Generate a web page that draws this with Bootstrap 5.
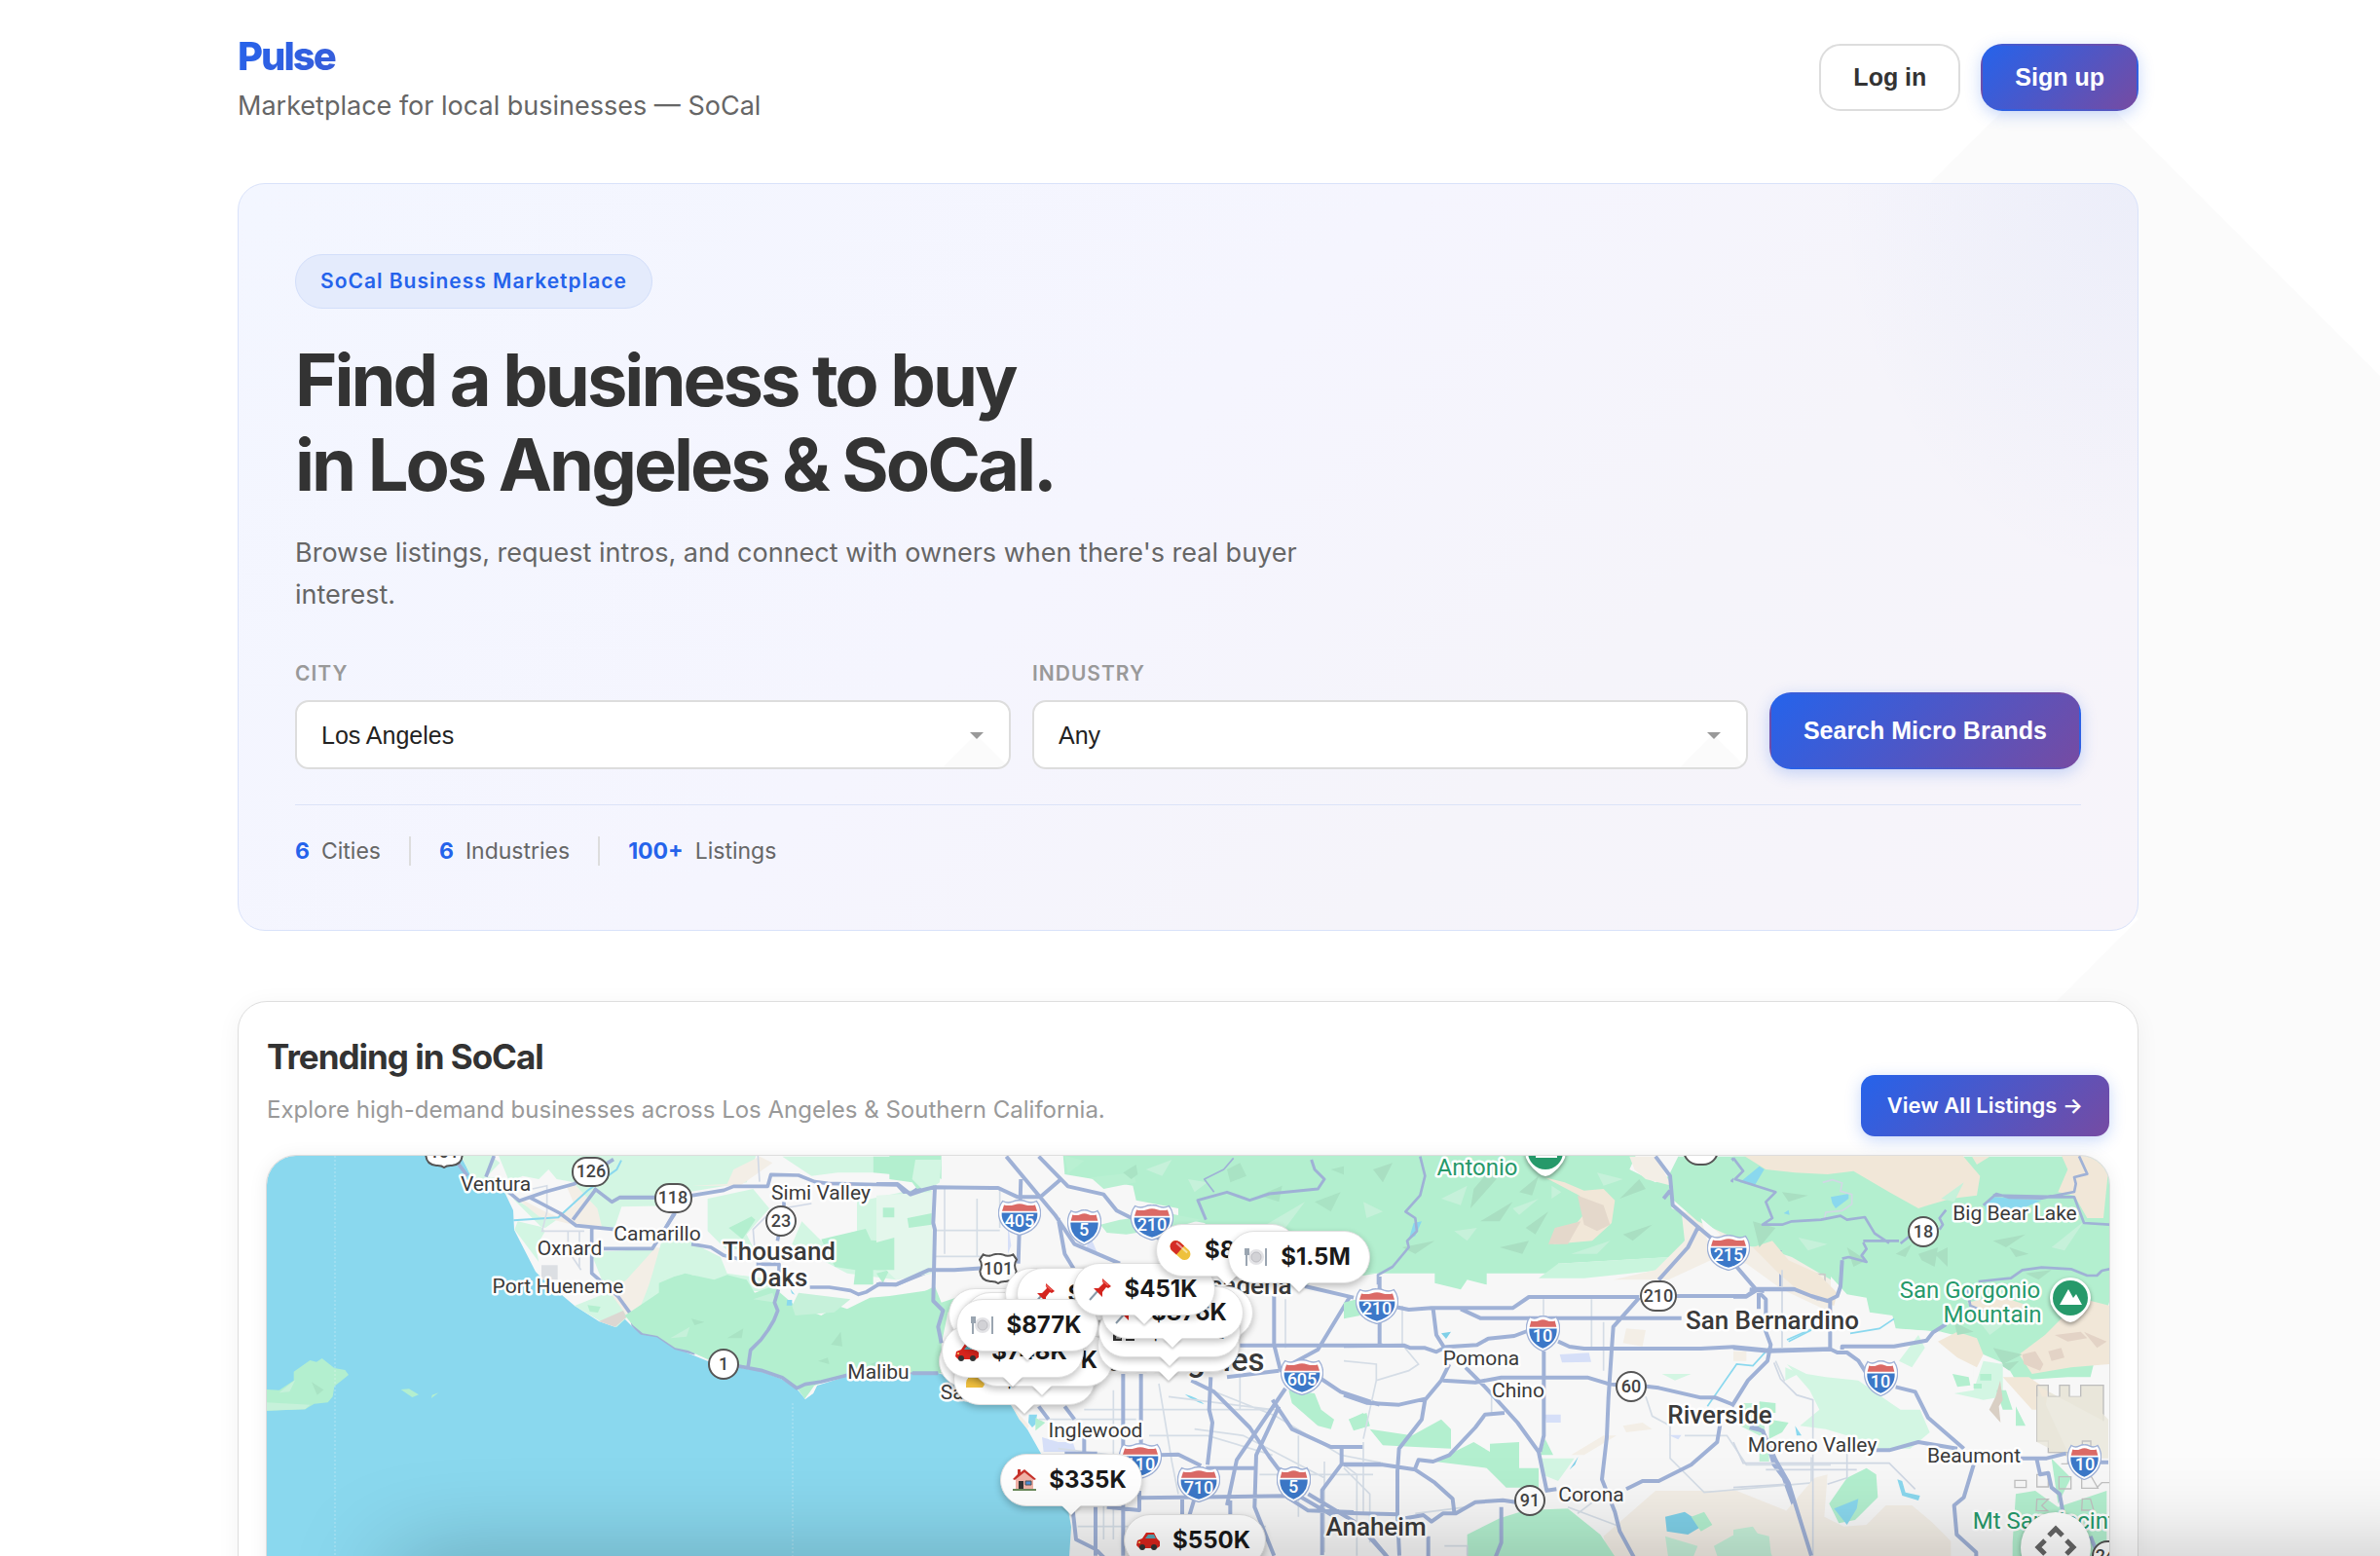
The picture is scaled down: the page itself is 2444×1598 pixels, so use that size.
<!DOCTYPE html>
<html lang="en">
<head>
<meta charset="utf-8">
<meta name="viewport" content="width=device-width, initial-scale=1">
<title>Pulse — Marketplace for local businesses</title>
<link href="https://cdn.jsdelivr.net/npm/bootstrap@5.3.0/dist/css/bootstrap.min.css" rel="stylesheet">
<style>
  :root { --ink:#333; --soft:#666; --pale:#999; --blue:#2563eb; --grad:linear-gradient(135deg,#2563eb 0%,#764ba2 100%); }
  body { font-family:Inter,"Liberation Sans",sans-serif; color:var(--ink); background:#fff; padding-right:4px; }
  .backdrop { top:0; right:0; width:902px; height:100%; z-index:-1; }
  .page { max-width:1952px; }
  .topbar { padding-top:34px; }
  .brand { font-size:40px; line-height:48px; font-weight:800; letter-spacing:-2px; background:linear-gradient(135deg,#2563eb 0%,#764ba2 100%); background-size:542px 100%; -webkit-background-clip:text; background-clip:text; color:transparent; text-decoration:none; }
  .tagline { font-size:27px; line-height:44px; color:var(--soft); margin-top:5px; }
  .actions { gap:21px; margin-top:11px; }
  .btn-pulse { font-family:"Liberation Sans",Arial,sans-serif; font-weight:700; font-size:25px; line-height:29px; border-radius:22px; padding:18px 33px; border:2px solid #ddd; background:#fff; color:var(--ink); }
  .btn-grad { color:#fff; border-color:transparent; background:var(--grad); box-shadow:0 4px 16px rgba(37,99,235,.25); }
  .btn-search { padding:22px 33px; height:79px; border-radius:22px; white-space:nowrap; }
  .hero { margin-top:57px; border:1px solid #d9e2fa; border-radius:28px; padding:72px 58px 66px;
    background:radial-gradient(ellipse 310px 410px at 100% 0,rgba(37,99,235,.045),rgba(37,99,235,.02) 60%,rgba(37,99,235,0)),linear-gradient(135deg,#f3f6ff 0%,#f5f5fe 45%,#f5f4fa 70%,#f7f4fa 100%); }
  .pill-tag { font-size:21px; line-height:32px; font-weight:600; letter-spacing:1px; color:var(--blue); background:#e4ebfc; border:1px solid #d2defa; border-radius:28px; padding:11px 25px; }
  .headline { font-size:74px; line-height:87px; font-weight:700; letter-spacing:-3px; margin:30px 0 25px; }
  .intro { font-size:27px; line-height:43px; color:var(--soft); max-width:1060px; margin-bottom:47px; }
  .searchrow { gap:22px; }
  .field-label { font-size:21px; line-height:26px; font-weight:600; letter-spacing:1px; color:var(--pale); margin-bottom:14px; }
  .field-pick { font-family:"Liberation Sans",Arial,sans-serif; font-size:25px; line-height:30px; height:71px; color:#222; padding:0 60px 0 25px; border:2px solid #ddd; border-radius:14px;
    background:url("data:image/svg+xml,%3Csvg xmlns='http://www.w3.org/2000/svg' width='96' height='36' viewBox='0 0 96 36'%3E%3Cpath d='M28 36L62 2L96 36z' fill='%23fbfbfb'/%3E%3Cpath d='M56 0h14l-7 7z' fill='%23999'/%3E%3C/svg%3E") no-repeat right 0 bottom 0 #fff; background-size:96px 36px; }
  .stats { margin-top:36px; padding-top:32px; border-top:1px solid #dbe3f8; font-size:23px; line-height:30px; color:var(--soft); }
  .stats b { color:var(--blue); font-weight:700; margin-right:12px; }
  .stats .bar { width:2px; height:30px; background:#ddd; margin:0 29px; }
  .trend { margin-top:72px; border:1px solid #dedede; border-radius:30px; padding:30px 29px; background:#fff; box-shadow:0 4px 24px rgba(0,0,0,.05); }
  .trend h2 { font-size:35px; line-height:52px; font-weight:700; letter-spacing:-1px; margin:0; }
  .trend p { font-size:24px; line-height:32px; color:var(--pale); margin:13px 0 11px; }
  .btn-all { font-size:22px; line-height:31px; font-weight:600; color:#fff; background:var(--grad); border:0; border-radius:14px; padding:16px 27px; box-shadow:0 4px 16px rgba(37,99,235,.25); }
  .map { height:640px; margin-top:20px; border-radius:30px; background:#8ad8ee; box-shadow:0 2px 20px rgba(0,0,0,.08); outline:1px solid #ddd; }
  .map > svg { width:100%; height:100%; display:block; }
  .land text { font-family:Roboto,sans-serif; font-size:21px; fill:#3a3a3a; stroke:#fff; stroke-width:5px; stroke-linejoin:round; paint-order:stroke; text-anchor:middle; }
  .land .big { font-size:26px; font-weight:500; }
  .land .park { fill:#26996a; font-size:24px; }
  .land .num { stroke:none; font-size:18px; font-weight:500; fill:#444; }
  .land .iso { fill:#fff; }
  .price { position:absolute; left:calc(50% + var(--x) * 1px); top:calc(var(--y) * 1px); width:146px; height:54px; border:1px solid #e0e0e0; border-radius:27px; background:#fff; color:#1a1a1a; font-size:24px; font-weight:700; line-height:30px; padding:0 3px 0 0; box-shadow:0 3px 7px rgba(0,0,0,.24); display:flex; align-items:center; justify-content:center; gap:13px; }
  .price::after { content:""; position:absolute; left:62px; top:52px; border:10px solid transparent; border-top-color:#fff; border-bottom:0; filter:drop-shadow(0 2px 1px rgba(0,0,0,.2)); }
  .price svg { width:24px; height:24px; flex:none; }
  .pan { position:absolute; right:19px; top:366px; width:72px; height:72px; border:0; border-radius:50%; background:#fff; padding:0; box-shadow:0 1px 5px rgba(0,0,0,.3); }
  .dock-shade { left:420px; right:-100px; bottom:-50px; height:20px; border-radius:20px; box-shadow:0 0 100px 20px rgba(0,0,0,.34); pointer-events:none; }
</style>
<script src="https://cdn.jsdelivr.net/npm/bootstrap@5.3.0/dist/js/bootstrap.bundle.min.js"></script>
</head>
<body class="vh-100 overflow-hidden position-relative">
<svg class="backdrop position-absolute" viewBox="0 0 902 1598" preserveAspectRatio="xMaxYMin slice" aria-hidden="true"><path d="M572 56L902 386V1598H0L654 944 200 428z" fill="#fbfbfb"/></svg>

<svg class="d-none" aria-hidden="true">
  <symbol id="i3" viewBox="0 0 132 110"><path d="M14 4Q28 12 44 6Q56 1 66 2Q76 1 88 6Q104 12 118 4Q134 24 130 50Q122 94 66 109Q10 94 2 50Q-2 24 14 4z" fill="#fff" stroke="#9fb1d6" stroke-width="4"/><path d="M18 16Q34 20 50 15Q66 10 82 15Q98 20 114 16L120 35H12z" fill="#db6a66"/><path d="M11 40H121Q124 84 66 101Q8 84 11 40z" fill="#3c78c8"/></symbol>
  <symbol id="i2" viewBox="0 0 105 110"><path d="M12 4Q24 12 36 6Q46 1 52 2Q59 1 69 6Q81 12 93 4Q107 24 103 50Q96 92 52 109Q9 92 2 50Q-2 24 12 4z" fill="#fff" stroke="#9fb1d6" stroke-width="4"/><path d="M16 16Q28 20 40 15Q52 10 65 15Q77 20 89 16L94 35H11z" fill="#db6a66"/><path d="M10 40H95Q97 82 52 101Q8 82 10 40z" fill="#3c78c8"/></symbol>
  <symbol id="us" viewBox="0 0 120 96"><path d="M14 4Q30 12 44 5Q60 0 76 5Q90 12 106 4L117 20Q106 36 116 56Q114 84 84 87Q68 86 60 93Q52 86 36 87Q6 84 4 56Q14 36 3 20z" fill="#fff" stroke="#555" stroke-width="6"/></symbol>
  <symbol id="e-pin" viewBox="0 0 24 24"><path d="M1 23L10 13" stroke="#8899a8" stroke-width="2"/><path d="M14 1l9 8-3 2-2-1-4 5 0 5-9-9 5 0 5-5-1-2z" fill="#d4241e"/><path d="M14 3l6 5" stroke="#f0605a" stroke-width="1.500"/></symbol>
  <symbol id="e-plate" viewBox="0 0 24 24"><circle cx="12" cy="12" r="8" fill="#e3e3e6"/><circle cx="12" cy="12" r="5" fill="#d2d2d6" stroke="#bdbdc2"/><path d="M2 3v18M0 3v6h4V3M22 3v18" fill="none" stroke="#9aa5b1" stroke-width="2"/></symbol>
  <symbol id="e-car" viewBox="0 0 24 24"><path d="M1 12l5-2 4-6h8l3 6 3 3v5l-3 2H3l-3-3z" fill="#d9251d"/><path d="M9 10l3-4h6l2 4z" fill="#58a6b4"/><circle cx="6" cy="19" r="3" fill="#333"/><circle cx="18" cy="19" r="3" fill="#333"/><circle cx="3" cy="14" r="1" fill="#ffd76b"/></symbol>
  <symbol id="e-house" viewBox="0 0 24 24"><path d="M3 10L12 3l9 7v12H3z" fill="#f2b3a8"/><path d="M0 11L5 6V1h3v3l4-3 12 10-2 1L12 4 2 12z" fill="#c8322b"/><path d="M6 13h5v9H6z" fill="#333"/><path d="M13 13h6v4h-6z" fill="#4d8fd6" stroke="#555"/><path d="M0 22h24" stroke="#6a8a5c" stroke-width="2"/></symbol>
  <symbol id="e-pill" viewBox="0 0 24 24"><g transform="rotate(42 12 12)"><rect x="0" y="6" width="24" height="12" rx="6" fill="#eec13c"/><path d="M12 6H6a6 6 0 0 0 0 12h6z" fill="#d42d26"/><path d="M4 9h15" stroke="#fff" stroke-opacity=".5" stroke-width="2"/></g></symbol>
  <symbol id="e-taco" viewBox="0 0 24 24"><path d="M3 12Q8 2 20 5l3 6-4 3z" fill="#4d9a3c"/><path d="M10 5l10 2 2 6-8-2z" fill="#c43a34"/><path d="M1 21Q0 10 8 9Q18 9 20 18l-2 3z" fill="#f0c03e"/></symbol>
  <symbol id="e-shop" viewBox="0 0 24 24"><path d="M1 4h22v18H1z" fill="#333"/><path d="M4 14h5v6H4zM15 14h5v6h-5z" fill="#999"/><path d="M10 14h4v8h-4z" fill="#eee"/></symbol>
</svg>

<div class="page mx-auto">
  <header class="topbar d-flex justify-content-between align-items-start">
    <div>
      <a class="brand d-block" href="#">Pulse</a>
      <div class="tagline">Marketplace for local businesses — SoCal</div>
    </div>
    <div class="actions d-flex">
      <button class="btn btn-pulse" type="button">Log in</button>
      <button class="btn btn-pulse btn-grad" type="button">Sign up</button>
    </div>
  </header>

  <main>
    <section class="hero">
      <span class="pill-tag d-inline-block">SoCal Business Marketplace</span>
      <h1 class="headline">Find a business to buy<br>in Los Angeles &amp; SoCal.</h1>
      <p class="intro">Browse listings, request intros, and connect with owners when there's real buyer interest.</p>
      <form class="searchrow d-flex align-items-end">
        <div class="flex-fill w-50 d-flex flex-column">
          <label class="field-label" for="city">CITY</label>
          <select class="field-pick form-select" id="city"><option>Los Angeles</option></select>
        </div>
        <div class="flex-fill w-50 d-flex flex-column">
          <label class="field-label" for="industry">INDUSTRY</label>
          <select class="field-pick form-select" id="industry"><option>Any</option></select>
        </div>
        <button class="btn btn-pulse btn-grad btn-search" type="button">Search Micro Brands</button>
      </form>
      <div class="stats d-flex align-items-center">
        <span><b>6</b>Cities</span><span class="bar"></span>
        <span><b>6</b>Industries</span><span class="bar"></span>
        <span><b>100+</b>Listings</span>
      </div>
    </section>

    <section class="trend">
      <div class="d-flex justify-content-between align-items-end">
        <div>
          <h2>Trending in SoCal</h2>
          <p>Explore high-demand businesses across Los Angeles &amp; Southern California.</p>
        </div>
        <a class="btn btn-all" href="#">View All Listings →</a>
      </div>

      <div class="map position-relative overflow-hidden">
        <svg class="land" viewBox="274 1186 1892 640" preserveAspectRatio="xMidYMin slice" role="img" aria-label="Map of Southern California">
          <path d="M470 1180L484 1207 505 1212 518 1223 527 1242 528 1262 550 1305 557 1312 590 1340 615 1356 632 1362 640 1352 650 1362 660 1369 677 1372 695 1384 727 1397 767 1405 780 1407 802 1415 818 1425 827 1436 835 1430 839 1422 855 1417 870 1412 963 1409 980 1415 1000 1425 1038 1442 1055 1467 1068 1490 1087 1527 1097 1550 1100 1567 1098 1598 1080 1640V1830H2170V1180z" fill="#f7f7f7"/>
          <!-- Ventura county and the islands -->
          <g transform="translate(270 1180) scale(.333333)">
            <path d="M10 738L50 740 95 710V683L145 648 165 653 182 642 220 672 253 678 264 693 220 728 215 760 200 778 158 782 130 799 10 803z" fill="#b3efcf"/>
            <path d="M50 748L100 708 82 745zM10 778L145 785 130 799 10 803z" fill="#c6f1da"/><path d="M150 715l37 24-20 16z" fill="#a9e3c4"/>
            <path d="M425 738l25-2 30 18-20 8zM519 765l2-10 20-7z" fill="#b3efcf"/>
            <path d="M610 15H700L730 40 690 82 735 90 760 140 720 120 640 80z" fill="#d3f6e3"/>
            <path d="M725 15H1320V170L1105 175 1080 250 1040 240 1000 200 960 100 905 90 880 60 850 90 800 80 760 100z" fill="#d3f6e3"/>
            <path d="M770 150L790 160 870 205 905 215 870 240 785 220 775 245 850 345 840 300 870 250z" fill="#d3f6e3"/>
            <path d="M765 135L860 185 905 205 960 170 935 110 955 100 1030 180 1045 240 955 230 850 205z" fill="#f3eee6"/>
            <path d="M1010 315L1200 305 1320 290V400L1150 490 1090 545 1040 528 960 480 1060 440z" fill="#d3f6e3"/>
            <path d="M1210 300L1265 310 1250 350 1200 390 1180 440 1160 490 1120 510 1070 440 1120 400z" fill="#f3eee6"/>
            <path d="M1035 528L1110 495 1120 515 1085 545z" fill="#dcd7d2"/>
            <path d="M1135 500L1220 440 1220 410 1290 380 1320 400V625L1275 610 1215 573 1165 565 1140 545z" fill="#b3efcf"/>
            <path d="M1000 478l40 5-8 18-25-3z" fill="#b3efcf"/>
            <path d="M772 217L910 208 1000 125 1090 60 1104 32" fill="none" stroke="#8ad8ee" stroke-width="6"/>
            <path d="M858 355h50v44h-50z" fill="#dcdfe3"/>
            <g fill="none" stroke="#d5dce6" stroke-width="5"><path d="M830 120l45-10v80l-15 60h130M940 250v60l40 60M975 250v110"/></g>
            <g fill="none" stroke="#9fb1d6" stroke-width="11" stroke-linejoin="round"><path d="M600 40l30 40M712 18l-25 65M740 115l50 42 80-28 90-25 120-75M820 145l95 50 50 38 120 12M1025 122L955 215M1020 118l55 42 25-14h110M1013 240v140l80 70 40 55 8 35 25 24 50 8 55 38 60 16M1050 304h150l70-110"/></g>
          </g>
          <g transform="translate(560 1180) scale(.333333)">
            <path d="M440 15H650L620 100 440 130z" fill="#d3f6e3"/>
            <path d="M450 110L560 105 580 60 660 20 700 40 600 110z" fill="#f3eee6"/>
            <path d="M500 150L640 120 690 180 620 260 640 300 560 310 500 250z" fill="#d3f6e3"/><path d="M565 240l70-35 12 10-40 60z" fill="#b3efcf"/>
            <path d="M730 20H1010V70H900L820 80zM960 160L1190 110V380L1080 400 930 380 760 290 790 220 850 280 960 250z" fill="#d3f6e3"/>
            <path d="M1010 20H1200V100L1150 110 1120 80 1010 70zM850 275L987 243 1003 278 1075 283V370H1010V415H950L955 370 892 360z" fill="#b3efcf"/>
            <path d="M1042 177h40v30h-40zM1118 210l75-15v35l-70 10zM1020 380l40-10-20 40z" fill="#b3efcf"/>
            <path d="M370 240L480 300 540 330 560 380 700 400 720 440 580 430 440 380 350 400 300 480 330 380z" fill="#d3f6e3"/>
            <path d="M380 400L430 380 520 400 560 385 620 400 645 440 700 420 770 480 850 510 900 480 930 490 1000 455 1060 450 1200 430V688L1130 685 930 690 838 722 800 768 775 733 725 700 660 680 600 670 500 645 440 618 400 610 345 573 300 565 270 540 245 510 350 440z" fill="#b3efcf"/>
            <path d="M385 580l60-35-10 30zM760 480l20-40 160 20-50 40-120 10zM640 460l60-20 10 30z" fill="#c6f1da"/><path d="M560 580l50-30-5 30zM880 600l30-40 5 45zM1000 660l30-10-5 20zM1060 600l50-25 5 20zM840 650l30-10 5 20zM450 520l40 10-30 10zM1120 640l20-20 5 30z" fill="#a9e3c4"/>
            <path d="M745 462h15v17h-17zM755 428l14 18-10-4zM740 430l20 20" fill="#8ad8ee"/>
            <path d="M798 768l27-18 13-28-10 5-14 20z" fill="#f7f7f7"/>
            <g fill="none" stroke="#d0d8e6" stroke-width="5"><path d="M655 18l5 80M820 165l-120 20-60 60 5 60"/></g>
            <g fill="none" stroke="#9fb1d6" stroke-width="11" stroke-linejoin="round"><path d="M230 147h110M440 142l110-18 30-12h105l10-36 85 2 50 20 40 5 215 5 20 22 20 4 30-20h50M395 198l-35 60M735 160v30l-20 90M450 290l60 10 40 25 50 12M650 352h70v60M815 423h60l65 10 25 12 25-8 40-25 50 3 120-48M718 430l-12 40 10 25-12 30-18 30-22 30-32 32-8 55M590 665l75 14 65 22 45 33 25-12 50-8 80-20M1120 685h80"/></g>
          </g>
          <!-- Los Angeles basin -->
          <g transform="translate(900 1180) scale(.333333)">
            <path d="M40 15H200V90L150 60 160 110 125 120 110 100 40 90z" fill="#b3efcf"/><path d="M120 30H200L195 100 150 130 110 90z" fill="#d3f6e3"/>
            <path d="M0 140L170 130 175 380 60 400 0 340z" fill="#e4f7ec"/><path d="M20 178h35v30H20zM95 210l75-15v35l-70 10zM0 285L55 270V370H0z" fill="#b3efcf"/>
            <path d="M0 465L75 450 130 445 180 420 200 470 260 450 250 480 220 500 200 600V688L100 685 0 692z" fill="#b3efcf"/>
            <path d="M575 15H1500V380H1540L1480 390 1380 400 1300 420 1260 400 1010 225 930 210V180L800 155 790 110 580 75z" fill="#b3efcf"/>
            <path d="M690 230l60-15 150-20 100 20-50 15-180 30-60-5zM580 18l60 15-50 40zM660 85l130-15 10 30-100 20z" fill="#b9f0d2"/>
            <path d="M760 70l40-25 5 30-20 15zM1080 60l40-20 20 40-50 20zM1180 140l70-30-10 50zM1350 160l80-30-30 60zM1100 270l80-20-40 50zM1400 60l80-20-30 40zM1240 340l90-60-30 70z" fill="#a9e3c4"/><path d="M830 60l80-30-30 50zM1200 230l120-70-60 80zM1360 290l80 20-60 40zM960 90l60 10-40 30z" fill="#c6f1da"/>
            <path d="M510 885l50 15 45 0 10 30-100 0zM660 270l20 45-35-12zM405 225l10 70-10 25z" fill="#d6dff8"/>
            <path d="M470 815l25 0-5 30-10 10 -12-15z" fill="#8ad8ee"/><path d="M490 825l30 15-30 25z" fill="#b3efcf"/>
            <path d="M950 752q40 10 60 32q-40-14-60-32z" fill="#8ad8ee"/>
            <path d="M1270 740L1350 750 1370 800 1410 830 1400 860 1360 850 1280 780zM1455 830L1500 810 1520 850 1480 860z" fill="#b3efcf"/>
            <path d="M415 785L440 830 465 860 470 850 445 820z" fill="#f3eee6"/>
            <g fill="none" stroke="#d5dde6" stroke-width="5"><path d="M210 120v200M380 120v120M180 248h200M310 150v180M180 328h150M730 740v460M640 800h600M500 830h300M870 720l40 240 20 100M560 920l250 30M1030 740l200 80 200 120 130 25M980 860l150 20 250 130M1260 460v150M620 1160h160M900 760l320 40M1120 640v160M840 880h180l200 60M700 1000v200M1300 880v250M1380 960v280M860 1160h340M1440 980l80 80v150M1180 1000h350"/></g>
            <g fill="none" stroke="#9fb1d6" stroke-width="12" stroke-linejoin="round"><path d="M0 105h65l40 32 40-14 30-8 200 2 60 28h70l60-52M180 115l-5 110 5 20-5 220 30 30-15 50 10 50M0 415h60l100-45 80 0 150-10M400 20l150 180 60 90 140 60M500 20l90 92 110 25 40 50 60 30 100 80M445 90l-8 260 M560 210l20 110 30 50M190 688h-80M1120 602h440M970 710l70 35 110 110 60 90 90 120 120 70M1030 700l-5 100 10 40-15 130M1240 680l120-65 100-165M1240 680l-160 20M1225 450v150l20 80M1320 420l150 35M1260 735l-150 220-30 140M1240 790l-70 150-5 160 60 150M1370 705l60 40 120 40M1220 770l60 90 120 55h100M1015 980h155M870 940l60-2 70 35M580 935h100M640 870v65M760 690v250M815 690v250M580 790l30 40M500 790l30 40M810 1072l450-6 70 45 140 5M1330 1060l150 90 90 100M810 1050v60l-100-10M605 1110l10 90 60 30 40 40M760 1090v160M675 1100v150M942 1075v50M978 1080l-15 50M1090 1080v50M1433 920v48h120M1433 968l-60 80v200M1550 390v40"/><path d="M1340 30l10 30 30 30-20 30-150 15-60 20-70-25-90 25 25 60" stroke-width="9"/><path d="M1100 25l-30 35-60 30 30 40" stroke-width="5"/></g>
          </g>
          <!-- Inland Empire -->
          <g transform="translate(1380 1180) scale(.333333)">
            <path d="M0 15H900L880 60 960 100 1000 80 1010 180 1060 200 1050 280 1010 330 660 350V380H440V415L380 400 360 430 280 410V380H0z" fill="#b3efcf"/>
            <path d="M660 350L1000 330 980 370 740 395H600z" fill="#c9f5dd"/>
            <path d="M880 20H960L1010 110 930 90 895 60zM1040 190L1100 200 1200 260 1280 310 1370 320 1500 400V500L1350 430 1240 350 1130 340 1000 400 830 400 960 370 1050 280z" fill="#f3eee6"/>
            <path d="M620 85l60 15 60 25 60-5 35 35-10 70-60 55-120 10 60-50 50-60-30-40z" fill="#f1e7d8"/><path d="M650 240l80-20-40 70-60 0zM720 140l80 30 20 60-40 20-40-20z" fill="#e4d8cb"/>
            <path d="M400 120l60-70 10 40-80 90zM540 130l60-50-20 60zM420 220l100-60-40 60zM560 240l70-50-40 70zM90 60l60-20-30 60zM180 300l100-20-60 40zM850 150l60-60 20 30zM860 260l90-30-60 50zM480 300l90-20-20 40z" fill="#a9dfc2"/><path d="M300 150l80-40-20 60zM520 180l80-30-60 50zM640 110l30 20-30 20zM340 250l70-10-30 40zM60 160l60 30-50 20zM780 70l80 20-60 20zM700 320l120-40-40 40z" fill="#c6f1da"/>
            <path d="M1030 20H1500V400L1380 330 1200 270 1090 220 1010 150 1000 80z" fill="#b3efcf"/><path d="M1230 20H1500V80L1400 70 1290 60z" fill="#f1e7d8"/>
            <path d="M1230 50l60-5-20 40 0 30-50-5zM215 225l25-5-20 45-20 10z" fill="#8ad8ee"/><path d="M1100 210l60 50-40 20z" fill="#f7f7f7"/>
            <path d="M0 470l40-10 10 50-50 10zM80 860l130 20 90-50 30 30 0 60-110-5-100-5zM15 830l55-20 10 40-50 15zM450 905l90-5v80l60 0v60l-100 0-60-60-160-20 120-60 50 30zM620 890l25 50-40 0z" fill="#b3efcf"/>
            <path d="M600 950h110l-50 70-50-20zM1360 670l70 30-10 60-60-30zM980 690l90 0-50 20zM1460 780l40-10v80z" fill="#d3f6e3"/>
            <path d="M870 550l60 5-10 50-60-10zM700 940l100-60 40 0-100 60zM1200 620h40v30h-40zM860 850l60-10 30 20-80 10zM960 1050l250 0 150 60 140 180H820l-20-100z" fill="#f3eee6"/>
            <path d="M1230 780h100l60 80-80 20 0 80-30 0 0-80-60-30z" fill="#c0f1d6"/><path d="M560 1110l130-5 100 80 60 90H560l-180 0 0-90 100-50z" fill="#b3efcf"/>
            <path d="M1140 1220l90-50 80 20 10 90h-160zM990 1190l100 30-20 50-70-10z" fill="#c6f0d9"/><path d="M990 1130l60-15 60 40-50 30-65-10zM695 985l27-40-10 25zM300 565l30-5-15 22zM1390 850l20 30-15 0z" fill="#7fd0e8"/><path d="M1070 1130l40-15 25 40-35 20z" fill="#b3efcf"/>
            <path d="M665 630l90-5 7 28-90 2zM620 815h48v25h-45zM1000 878h40l-10 14z" fill="#d6dff8"/>
            <path d="M1370 590l70-35M1120 790l90-130 50 5 50-55" stroke="#8ad8ee" stroke-width="5" fill="none"/><path d="M1452 383h30v35h-30z" fill="none" stroke="#c9c9c9" stroke-width="5"/>
            <g fill="none" stroke="#d5dde6" stroke-width="5"><path d="M180 480v120l50 60-30 20-100 30-40 180M615 460v60M763 460v150M800 530v150M60 900v220M455 750v60M930 760l20 60 55 30v100l105 105 340-30M1050 880h130l60 90h260M690 1100l160 60M720 1120l80-60M1330 650l40 90 70 30v450M220 1120l160-20M310 1220h70v30M0 970l40 30v250M0 650l100 10 0 50"/></g>
            <g fill="none" stroke="#9fb1d6" stroke-width="12" stroke-linejoin="round"><path d="M160 484l40 8 70-5h250l50-34h340M1020 450h220l30-22h120l70 30 40 5M360 490l60 28h620M0 604l185-2 20 8 45 0 35 12 30-15 95-6 35-20 80-8 40-15M660 590l35 16 45 6h360l100-5 110 10 190-4M110 530v70M275 490l10 80 25 40M325 660l-25 50-50 60-10 60-70 90-5 70 0 130 6 130M0 755l70 24 100 6 80-18M305 710l100 6 80-15 265 0 60 18 30 5M930 728l40 5 130 30h45l50 20M375 670l60 60 100 110 65 90 25 120M616 620v260l-12 50M970 400l90-100 30-60M960 20l45 60 8 90 75 65 60 50M985 150l20-25M1210 360l60 70 30 30v100l15 40-10 50-60 60-50 80M1250 430l45 5M1278 430v60M910 455l-80 90-5 70-10 150-5 120-15 130 40 100 15 60 60 110M1160 840l-10 60-80 70-100 50-50 0-50 25M1230 830l65 40 30 100 30 40 90 250M0 970h120l100 15 60 40 55 50 5 40M220 980l10-25 45 5 50-20 80-85 30-40 60-5M620 1050l35-5M0 1118l170 5M190 1135l55-10 25 20 35-25 40 0 60-35 85-6 40 6 50-15M485 1100v110l-20 50M260 1190v70M85 1195l50 60M1460 915h20"/><path d="M235 20l15 60-15 60-45 50 30 20 5 40-30 30 5 20-50 60-45 25v30M1195 25l35 40-35 30 130 35-25 30 20 50-30 25 60-5 25 10 60-8 60-4M1320 250l25 60-15 20 30 15-15 15v60" stroke-width="8"/></g>
          </g>
          <!-- San Bernardino mountains and Beaumont -->
          <g transform="translate(1780 1080) scale(.333333)">
            <path d="M0 320H1160V760L1100 1000 1030 1000 870 1010 840 960 700 900 640 860 500 850 490 810 420 800 410 755 350 745 300 690 150 610 0 590z" fill="#b3efcf"/>
            <path d="M20 310H700L760 380 750 440 670 450 600 470 570 480 480 430 370 365 290 375 190 370 100 360zM735 320H790L750 345zM1010 315H1160L1140 510 1090 510 1050 440 1000 430 1030 360z" fill="#f1e7d8"/>
            <path d="M60 600l60-20 50 60 90 40 60 60-10 40-90-30-80-70z" fill="#f1e7d8"/>
            <path d="M480 850L640 860 680 870 690 950 740 960 740 1000 830 1010 860 1130 930 1160 930 1200 980 1250 1160 1250 1160 1600 640 1600 500 1400 400 1300 100 1200 90 1080 160 1010z" fill="#f7f7f7"/>
            <path d="M630 890l60-30 60 20 20 50-20 40-60-30zM880 930l80-60 80-80 40-30 80 20v180l-120 10-120 20zM720 770l100-20 90 30-60 30-80 0zM830 1000l80 0 60 40-10 60-40 0z" fill="#f1e7d8"/><path d="M890 930l40-10 25 40-10 20-50-20zM990 870l80-10 20 20-60 10zM970 920l40-10 10 30-40 10zM1080 860l70 30-30 20z" fill="#e3d3c6"/>
            <path d="M500 620l50-30-20 40zM570 620l60-20-10 60-40-20zM620 620l40-20v60zM350 600l60 40-40 20zM800 580l100-20-60 40zM900 680l80-10-40 30zM850 600l60 20-40 10zM800 910l90 20-60 30zM820 960l60-10-30 30zM60 520l70 20-50 60zM150 430l80 10-60 20zM680 830l60 30-50 10z" fill="#a9dfc2"/><path d="M980 600l100-80-60 90zM200 570l90 20-60 20zM640 450l70-50-30 60zM750 820l80 20-40 30z" fill="#c6f1da"/>
            <path d="M165 960l60 30 60 10 100 10 100 70 30 20 60 0 30 70-60 50-100 0-60-30-100-30-80-10 60-50-30-60zM510 950l60-80 20 40-40 60zM680 1050l60 -10 30-90 60 10 0 100-60 10z" fill="#d3f6e3"/>
            <path d="M675 990l50 10 5 25-40 5zM760 990h35v20h-35zM740 1020h25v15h-25zM80 1075l50 5 0 30-50 0zM110 1130l60 10-20 30-40 20zM810 1040l30 0 20 60-30 0zM870 1090l30 60-30 0zM350 1310l60-30 30 20 5 70-70 70-50 10-30-60zM870 1360l60-10 70 50 150-50v240H860l0-80zM980 1250l60 60-40 80z" fill="#b3efcf"/>
            <path d="M250 1310l40-10-10 130 60 30 70-5 60-60 80 0 60 50 60 60 0 60H200l-40-150z" fill="#f3eee6"/><path d="M0 1470l60-10 60 90H0z" fill="#c6f0d9"/><path d="M822 1010l8 60-12 20 5 50-35-40 20-40z" fill="#d9cfc4"/>
            <path d="M300 445l55-10 0 15-40 30-10-15zM800 445l150 10-60 25-80 0-30 20-5-30zM505 1315l15 5 10 35 45 10-5 15-50-15zM310 1405l75-30-5 30-30 50zM155 495l15-10 3 15zM190 1150l20 30-15 0zM20 400l60-50 15 10-30 50z" fill="#8ad8ee"/><path d="M165 885l80-35M360 865l90-15 45-30" stroke="#8ad8ee" stroke-width="5" fill="none"/>
            <path d="M935 1025h35v35h35v-35h30v35h35v-35h70v110M935 1025v172h35v35h60" fill="#e9e6da" stroke="#bcbcbc" stroke-width="4"/><path d="M935 1060h200v50l20 20v120h-120l-100-50z" fill="#e9e6da" fill-opacity=".8"/>
            <g fill="none" stroke="#c1c1c1" stroke-width="4"><path d="M867 1318h35v22h-35zM935 1300h35v38h-35zM1003 1307h37v37h-37zM1073 1307h30l20 35h-50zM1075 1375h25l10 35h-37zM935 1376h35l-20 20 18 16h-35zM1120 1340l15-15h25M970 1232h60v35h-20M1075 1197h26v30h-26z"/></g>
            <g fill="none" stroke="#d0d8e4" stroke-width="5"><path d="M125 955l20 50 50 50 50 15v480M0 1340l160-10M0 1200l30 65h450l80 80M100 1285h280M350 1200v110l-60 20M275 400l30-8 30 10-5 25 35 10 0 30-30 20-50 5-5 20M150 670v240"/></g>
            <g fill="none" stroke="#9fb1d6" stroke-width="12" stroke-linejoin="round"><path d="M0 752h40l35-22 115 0 50 20 50 15 30-15 10-30 5-80M298 765v150M0 910l110 10 190-6 20 10 30 0 35 25 35 55M335 915v-10h160l100-18 20-25 40-25M500 1030l60 15 40 80 110 95M440 1225l40 0 90-25 120 20M885 1250h80l60-15M1130 1262h25M740 1270l-30 100-30 25 8 90 60 55v20M935 1255l10 45 25-5 10 45 25 20 10 55M1100 1490l20 50M50 1155l40 10 40 90 40 70 70 225"/><path d="M0 325l30 40-25 25 125 40-30 30 20 50-30 20 60 0 30-10 90-5 60-12 20 12 55-8 30 50 45 30M515 588l25-20M635 545l10-15-10-20 20-25M400 580h110M400 585l10 20-15 20 15 20-55-15-20 5M770 470l40-35 40 12 100 2 100-20 5-25-5-20 40-10-25-55M800 440l240 5 10 0 30 80 80 5M755 705l100-10 35-25 60-8 90 5 50 20 30 0 15-15 25-5M720 730l10 50 60 25M330 700l5-60" stroke-width="8"/></g>
          </g>
          <path d="M344 1186V1640M814 1440V1640" stroke="#fff" stroke-opacity=".35" stroke-dasharray="2 2"/>
          <!-- route markers -->
          <g>
            <use href="#i3" x="1025" y="1231" width="44" height="37"/><text class="num iso" x="1047" y="1259">405</text>
            <use href="#i2" x="1096" y="1241" width="35" height="37"/><text class="num iso" x="1113" y="1268">5</text>
            <use href="#i3" x="1161" y="1236" width="44" height="37"/><text class="num iso" x="1183" y="1263">210</text>
            <use href="#i3" x="1315" y="1395" width="44" height="37"/><text class="num iso" x="1337" y="1422">605</text>
            <use href="#i3" x="1149" y="1481" width="44" height="37"/><text class="num iso" x="1171" y="1509">110</text>
            <use href="#i3" x="1209" y="1505" width="44" height="37"/><text class="num iso" x="1231" y="1533">710</text>
            <use href="#i2" x="1311" y="1505" width="35" height="37"/><text class="num iso" x="1328" y="1532">5</text>
            <use href="#i3" x="1392" y="1322" width="44" height="37"/><text class="num iso" x="1414" y="1349">210</text>
            <use href="#i2" x="1567" y="1350" width="35" height="37"/><text class="num iso" x="1584" y="1377">10</text>
            <use href="#i3" x="1753" y="1267" width="44" height="37"/><text class="num iso" x="1775" y="1294">215</text>
            <use href="#i2" x="1914" y="1396" width="35" height="37"/><text class="num iso" x="1931" y="1424">10</text>
            <use href="#i2" x="2123" y="1482" width="35" height="37"/><text class="num iso" x="2141" y="1509">10</text>
            <use href="#us" x="1005" y="1286" width="40" height="32"/><text class="num" x="1025" y="1308">101</text>
            <use href="#us" x="436" y="1167" width="40" height="32"/><text class="num" x="456" y="1188">101</text>
            <g fill="#fff" stroke="#555" stroke-width="2"><rect x="588" y="1188" width="37" height="29" rx="14"/><rect x="673" y="1215" width="37" height="29" rx="14"/><circle cx="802" cy="1253" r="15"/><circle cx="743" cy="1400" r="15"/><rect x="1685" y="1315" width="36" height="30" rx="15"/><circle cx="1675" cy="1423" r="15"/><circle cx="1571" cy="1540" r="15"/><circle cx="1975" cy="1264" r="15"/><rect x="1729" y="1165" width="35" height="30" rx="15"/><rect x="2149" y="1582" width="36" height="30" rx="15"/></g>
            <text class="num" x="607" y="1208">126</text><text class="num" x="691" y="1235">118</text><text class="num" x="802" y="1259">23</text><text class="num" x="743" y="1406">1</text><text class="num" x="1703" y="1336">210</text><text class="num" x="1675" y="1429">60</text><text class="num" x="1571" y="1546">91</text><text class="num" x="1975" y="1270">18</text><text class="num" x="2167" y="1603">243</text>
          </g>
          <g fill="#fff"><path d="M2126 1311a21 21 0 0 1 21 21q0 11-14 22q-7 6-14 0q-14-11-14-22a21 21 0 0 1 21-21z" style="filter:drop-shadow(0 2px 2px rgba(0,0,0,.4))"/><circle cx="2126" cy="1332" r="18" fill="#26996a"/><path d="M2115 1339l9-16 5 9 3-4 6 11z"/>
          <path d="M1587 1161a21 21 0 0 1 21 21q0 11-14 22q-7 6-14 0q-14-11-14-22a21 21 0 0 1 21-21z" style="filter:drop-shadow(0 2px 2px rgba(0,0,0,.4))"/><circle cx="1587" cy="1182" r="18" fill="#26996a"/><path d="M1577 1184h22v4h-22z"/></g>
          <text x="509" y="1222">Ventura</text><text x="585" y="1288">Oxnard</text><text x="675" y="1273">Camarillo</text><text x="573" y="1327">Port Hueneme</text><text x="843" y="1231">Simi Valley</text>
          <text class="big" x="800" y="1293">Thousand</text><text class="big" x="800" y="1320">Oaks</text><text x="902" y="1415">Malibu</text><text x="1030" y="1436">Santa Monica</text><text x="1125" y="1475">Inglewood</text>
          <text class="big" x="1269" y="1328">Pasadena</text><text x="1208" y="1407" style="font-size:33px;font-weight:500">Los Angeles</text><text class="big" x="1413" y="1576">Anaheim</text>
          <text class="park" x="1517" y="1206">Antonio</text><text x="1521" y="1401">Pomona</text><text x="1559" y="1434">Chino</text><text class="big" x="1820" y="1364">San Bernardino</text><text class="big" x="1766" y="1461">Riverside</text>
          <text x="1861" y="1490">Moreno Valley</text><text x="1634" y="1541">Corona</text><text x="2027" y="1501">Beaumont</text><text x="2069" y="1252">Big Bear Lake</text>
          <text class="park" x="2023" y="1332">San Gorgonio</text><text class="park" x="2046" y="1357">Mountain</text><text class="park" x="2106" y="1569">Mt San Jacinto</text>
        </svg>

        <button class="price" type="button" aria-label="Listing" style="--x:-246;--y:136"></button>
        <button class="price" type="button" aria-label="Listing" style="--x:-230;--y:140"></button>
        <button class="price" type="button" aria-label="Listing" style="--x:-188;--y:115"></button>
        <button class="price" type="button" style="--x:-176;--y:115"><svg><use href="#e-pin"/></svg>$451K</button>
        <button class="price" type="button" aria-label="Listing" style="--x:-256;--y:184"></button>
        <button class="price" type="button" style="--x:-241;--y:202"><svg><use href="#e-taco"/></svg>$840K</button>
        <button class="price" type="button" style="--x:-223;--y:183"><svg><use href="#e-pin"/></svg>$850K</button>
        <button class="price" type="button" style="--x:-253;--y:174"><svg><use href="#e-car"/></svg>$748K</button>
        <button class="price" type="button" style="--x:-238;--y:147"><svg><use href="#e-plate"/></svg>$877K</button>
        <button class="price" type="button" aria-label="Listing" style="--x:-79;--y:134"></button>
        <button class="price" type="button" aria-label="Listing" style="--x:-93;--y:168"></button>
        <button class="price" type="button" style="--x:-92;--y:153"><svg><use href="#e-shop"/></svg>$780K</button>
        <button class="price" type="button" style="--x:-89;--y:134"><svg><use href="#e-pin"/></svg>$876K</button>
        <button class="price" type="button" style="--x:-118;--y:110"><svg><use href="#e-pin"/></svg>$451K</button>
        <button class="price" type="button" style="--x:-33;--y:70"><svg><use href="#e-pill"/></svg>$850K</button>
        <button class="price" type="button" style="--x:41;--y:77"><svg><use href="#e-plate"/></svg>$1.5M</button>
        <button class="price" type="button" style="--x:-193;--y:306"><svg><use href="#e-house"/></svg>$335K</button>
        <button class="price" type="button" style="--x:-66;--y:368"><svg><use href="#e-car"/></svg>$550K</button>
        <button class="pan" type="button" aria-label="Map camera controls"><svg width="72" height="72" viewBox="0 0 72 72" fill="none" stroke="#666" stroke-width="5"><path d="M29 24l7-7 7 7M25 29l-7 7 7 7M47 29l7 7-7 7M29 48l7 7 7-7"/></svg></button>
      </div>
    </section>
  </main>
</div>
<div class="dock-shade position-fixed"></div>
</body>
</html>
